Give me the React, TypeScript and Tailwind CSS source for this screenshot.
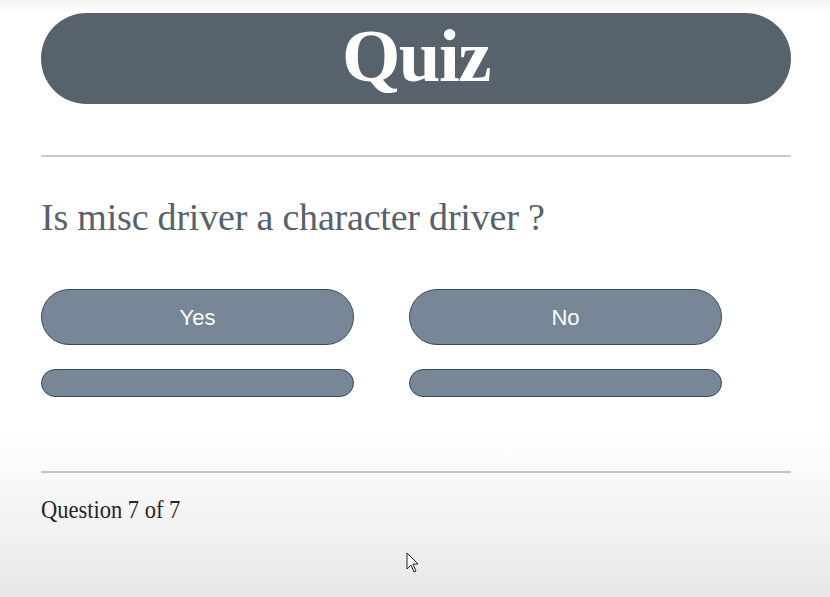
export default function App() {
  return (
    <div className="relative w-[830px] h-[597px] overflow-hidden bg-[linear-gradient(to_bottom,#f3f3f3_0px,#ffffff_14px,#ffffff_430px,#f6f6f6_500px,#e7e7e7_597px)]">
      <div className="px-[41px] pt-[13px] w-[832px]">
        {/* header */}
        <div className="h-[91px] rounded-full bg-[#57626c] flex items-center justify-center">
          <h1 className="text-white font-bold text-[75px] leading-none tracking-[-1.5px] font-['Liberation_Serif',serif] pb-[6px]">
            Quiz
          </h1>
        </div>

        <div className="mt-[51px] h-[2px] bg-[#cacaca]" />

        <p className="mt-[38px] text-[38px] leading-[44px] tracking-[-0.2px] text-[#56616b] font-['Liberation_Serif',serif]">
          Is misc driver a character driver ?
        </p>

        <div className="mt-[50px] flex gap-[55px]">
          <button className="w-[313px] h-[56px] rounded-full bg-[#778797] border border-[#3e4a5c] text-white text-[22px] font-['Liberation_Sans',sans-serif]">
            Yes
          </button>
          <button className="w-[313px] h-[56px] rounded-full bg-[#778797] border border-[#3e4a5c] text-white text-[22px] font-['Liberation_Sans',sans-serif]">
            No
          </button>
        </div>
        <div className="mt-[24px] flex gap-[55px]">
          <button className="w-[313px] h-[28px] rounded-full bg-[#778797] border border-[#3e4a5c]" />
          <button className="w-[313px] h-[28px] rounded-full bg-[#778797] border border-[#3e4a5c]" />
        </div>

        <div className="mt-[74px] h-[2px] bg-[#c4c4c4]" />

        <p className="mt-[22px] text-[25px] leading-[30px] text-[#262626] origin-left scale-x-[0.9] font-['Liberation_Serif',serif]">
          Question 7 of 7
        </p>
      </div>

      {/* mouse pointer */}
      <svg className="absolute left-[406px] top-[552px]" width="14" height="22" viewBox="0 0 14 22">
        <path d="M1 1 L1 17 L5 13 L8 20 L10 19 L7 12 L12 12 Z" fill="#ffffff" stroke="#222222" strokeWidth="1" strokeLinejoin="round" />
      </svg>
    </div>
  );
}
